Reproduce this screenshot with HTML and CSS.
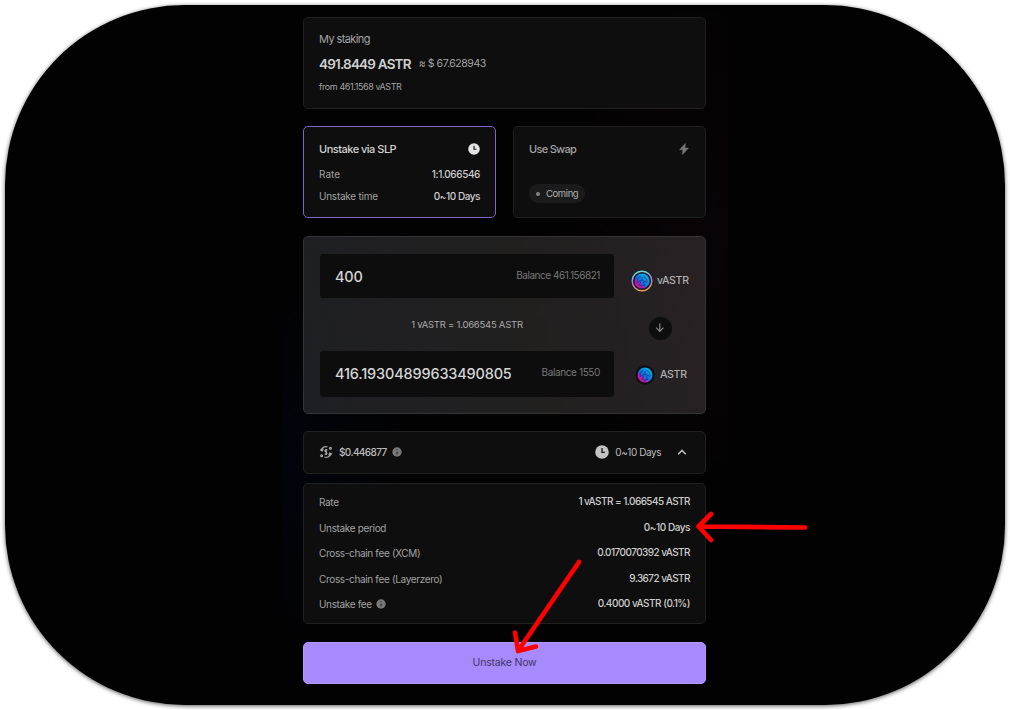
FILE: index.html
```
<!DOCTYPE html>
<html lang="en">
<head>
<meta charset="utf-8">
<title>Unstake ASTR</title>
<link rel="stylesheet" href="styles.css">
</head>
<body>
<svg class="defs" width="0" height="0">
  <defs>
    <linearGradient id="coin" x1="0.1" y1="0.9" x2="0.85" y2="0.1">
      <stop offset="0" stop-color="#ed0598"/><stop offset="0.28" stop-color="#a421b8"/><stop offset="0.45" stop-color="#0a72e4"/><stop offset="1" stop-color="#00bce6"/>
    </linearGradient>
    <linearGradient id="ring" x1="0.35" y1="0" x2="0.6" y2="1">
      <stop offset="0" stop-color="#69e5df"/><stop offset="0.5" stop-color="#b07ae0"/><stop offset="1" stop-color="#e7a34c"/>
    </linearGradient>
    <symbol id="astar" viewBox="-8 -8 16 16">
      <circle r="7.5" fill="url(#coin)"/>
      <g fill="none" stroke="#163080" stroke-width=".8" stroke-linecap="round">
        <path d="M-4.8 1.6A5 5 0 0 1-1.8-4.7M1.8-4.7A5 5 0 0 1 4.8 1.6M3 4.2A5.2 5.2 0 0 1-3 4.2"/>
        <path d="M0-3.5V-.8M0-.8L-3.6 .8M0-.8L3.6 .8M-1.6 1.6L-2.4 3.4M1.6 1.6L2.4 3.4"/>
      </g>
    </symbol>
    <symbol id="clock" viewBox="0 0 14 14">
      <circle cx="7" cy="7" r="6.8" fill="currentColor"/>
      <path d="M7 3.1V7.3H9.8" fill="none" stroke="#111" stroke-width="1.3"/>
    </symbol>
    <symbol id="info" viewBox="0 0 10 10">
      <circle cx="5" cy="5" r="4.7" fill="#777"/>
      <path d="M5 4.4V7.5M5 2.3V3.3" stroke="#303030" stroke-width="1.1"/>
    </symbol>
  </defs>
</svg>
<div class="frame">
  <main class="column">
    <section class="card staking">
      <div class="staking-title">My staking</div>
      <div class="staking-amount"><span class="amount">491.8449 ASTR</span><span class="usd">≈ $ 67.628943</span></div>
      <div class="staking-from">from 461.1568 vASTR</div>
    </section>

    <div class="modes">
      <section class="card mode mode-active">
        <div class="mode-head"><span class="mode-name">Unstake via SLP</span><svg class="mode-clock"><use href="#clock"/></svg></div>
        <div class="mode-row rate"><span>Rate</span><span class="v v-ratio">1:1.066546</span></div>
        <div class="mode-row"><span class="k-time">Unstake time</span><span class="v v-days">0~10 Days</span></div>
      </section>
      <section class="card mode">
        <div class="mode-head"><span class="mode-swap">Use Swap</span><svg class="bolt" viewBox="0 0 10 12"><path d="M6.3.6L.6 6.8H3.9L3.5 11.4L9.4 5.1H6Z" fill="#777" stroke="#777" stroke-width=".6" stroke-linejoin="round"/></svg></div>
        <div class="coming"><i class="dot"></i><span>Coming</span></div>
      </section>
    </div>

    <section class="swap">
      <div class="fields">
        <div class="field"><input class="value" value="400" aria-label="vASTR amount"><span class="balance">Balance 461.156821</span></div>
        <div class="rate-line"><span>1 vASTR = 1.066545 ASTR</span></div>
        <div class="field field-out"><input class="value" value="416.193048996334908052" readonly aria-label="ASTR amount"><span class="balance balance-out">Balance 1550</span></div>
      </div>
      <div class="tokens">
        <div class="token token-in">
          <svg class="coin-in" viewBox="-11 -11 22 22"><circle r="9.8" fill="#16182a" stroke="url(#ring)" stroke-width="1.4"/><use href="#astar" x="-8" y="-8" width="16" height="16"/></svg>
          <span>vASTR</span>
        </div>
        <svg class="arrow-down" viewBox="0 0 23 23"><circle cx="11.5" cy="11.5" r="11.5" fill="#0e0e0e"/><path d="M10.8 6.5V14.3M7.2 10.7L10.8 14.3L14.4 10.7" fill="none" stroke="#888" stroke-width="1.2"/></svg>
        <div class="token token-out">
          <svg class="coin-out" viewBox="-10 -10 20 20"><circle r="9.7" fill="#0d0c0f"/><use href="#astar" x="-8" y="-8" width="16" height="16"/></svg>
          <span>ASTR</span>
        </div>
      </div>
    </section>

    <section class="card summary">
      <svg class="gas" viewBox="0 0 14 14" fill="none" stroke="#aaa" stroke-width="1.2"><path d="M2 5.5A5 5 0 0 1 8.5 2M4.3 3.8L3.2 5.9L1 4.8M12 8.5A5 5 0 0 1 5.5 12M9.7 10.2L10.8 8.1L13 9.2M8.4 4.8C6.4 4.2 5.3 5.8 6.6 6.7C8.8 7.5 8 9.9 5.7 9M7.2 4V10"/><circle cx="11.4" cy="3.2" r=".9"/><circle cx="2.6" cy="10.8" r=".9"/></svg>
      <span class="gas-cost">$0.446877</span>
      <svg class="info"><use href="#info"/></svg>
      <svg class="sum-clock"><use href="#clock"/></svg>
      <span class="v-days sum-days">0~10 Days</span>
      <svg class="chevron" viewBox="0 0 10 8"><path d="M1.2 6.3L5 2.4L8.8 6.3" fill="none" stroke="#bbb" stroke-width="1.6"/></svg>
    </section>

    <section class="card details">
      <div class="row"><span class="k">Rate</span><span class="v v-amt">1 vASTR = 1.066545 ASTR</span></div>
      <div class="row"><span class="k">Unstake period</span><span class="v v-days">0~10 Days</span></div>
      <div class="row"><span class="k">Cross-chain fee (XCM)</span><span class="v v-amt">0.0170070392 vASTR</span></div>
      <div class="row"><span class="k">Cross-chain fee (Layerzero)</span><span class="v v-amt">9.3672 vASTR</span></div>
      <div class="row"><span class="k fee">Unstake fee<svg class="info"><use href="#info"/></svg></span><span class="v v-fee">0.4000 vASTR (0.1%)</span></div>
    </section>

    <button class="submit" type="button"><span>Unstake Now</span></button>
  </main>
</div>
<svg class="marks" viewBox="0 0 1010 710" fill="none" stroke="#fe0000" stroke-width="4.6" stroke-linecap="round" stroke-linejoin="round">
  <path d="M805 527.5L698.5 526.5M711 514L698.5 526.5L711 540"/>
  <path d="M579 562L518 651M515 632.5L518 651L536 646.5"/>
</svg>
</body>
</html>
```
FILE: styles.css
```
* { box-sizing: border-box; }
body { margin: 0; width: 1010px; height: 710px; overflow: hidden; background: #fff; padding: 5px; font-family: Inter, "Noto Sans", sans-serif; font-size: 10px; line-height: 14px; color: #a3a3a3; white-space: nowrap; }
svg { display: block; flex: none; }
.defs { position: absolute; }
.frame { width: 1000px; height: 700px; border-radius: 180px; padding: 12px 0 0 298px; box-shadow: 0 1px 4px rgba(0,0,0,.65); background: radial-gradient(ellipse 150px 290px at 410px 235px, #090306, transparent) 278px 0 / 445px 100% no-repeat, radial-gradient(ellipse 120px 190px at 10px 460px, #01040c, transparent) 278px 0 / 445px 100% no-repeat, #020202; }
.column { width: 403px; }
.card { background: #0e0e0e; border: 1px solid #202020; border-radius: 5px; }

.staking { height: 92px; padding: 14px 15px; }
.staking-title { font-size: 11px; letter-spacing: -.6px; }
.staking-amount { display: flex; align-items: center; gap: 8px; margin-top: 9px; height: 18px; }
.amount { font-size: 13.5px; font-weight: 600; color: #d0d0d0; letter-spacing: -.8px; }
.usd { font-size: 10.5px; letter-spacing: -.43px; }
.staking-from { margin-top: 7px; font-size: 9px; letter-spacing: -.4px; }

.modes { display: grid; grid-template-columns: 193px 193px; gap: 17px; margin-top: 17px; }
.mode { height: 92px; padding: 15px; }
.mode-active { border-color: #7f66c4; }
.mode-head, .mode-row { display: flex; justify-content: space-between; align-items: center; }
.mode-head { height: 14px; font-size: 11px; }
.mode-name { color: #d2d2d2; font-weight: 500; letter-spacing: -.5px; }
.mode-swap { letter-spacing: -.7px; font-weight: 500; }
.mode-clock { width: 12px; height: 12px; color: #e4e4e4; }
.bolt { width: 10px; height: 12px; margin-right: 1px; }
.rate { margin: 11px 0 8px; }
.k-time { letter-spacing: -.25px; }
.v { color: #cdcdcd; font-weight: 500; }
.v-ratio { letter-spacing: -.4px; }
.v-days { letter-spacing: -.45px; }
.v-amt { letter-spacing: -.56px; }
.v-fee { letter-spacing: -.5px; }
.coming { display: flex; align-items: center; gap: 6px; width: 56px; height: 19px; margin-top: 28px; padding-left: 7px; border-radius: 10px; background: #1b1b1b; color: #b0b0b0; font-size: 9.5px; letter-spacing: -.4px; }
.dot { width: 4px; height: 4px; border-radius: 50%; background: #858585; }

.swap { display: flex; height: 178px; margin-top: 18px; padding: 17px 0 17px 16px; border: 1px solid #343335; border-radius: 5px; background: linear-gradient(77deg, #1e1f24 0%, #202022 30%, #21201f 55%, #252022 80%, #272123 100%); }
.fields { flex: none; width: 294px; }
.field { display: flex; justify-content: space-between; height: 44px; padding: 15px 14px 0 15px; border-radius: 3px; background: #0d0d0d; }
.field-out { height: 46px; }
.value { width: 176px; height: 16px; padding: 0; border: 0; outline: 0; background: none; font: 500 14.5px/16px Inter, sans-serif; letter-spacing: -.17px; color: #d4d4d4; }
.balance { line-height: 12px; color: #777; letter-spacing: -.45px; }
.balance-out { letter-spacing: -.38px; }
.rate-line { height: 53px; padding-top: 20px; text-align: center; color: #ababab; font-size: 9.5px; letter-spacing: -.24px; }
.tokens { flex: 1; color: #b1aeaf; font-weight: 500; font-size: 10.5px; }
.token { display: flex; align-items: center; letter-spacing: -.3px; }
.token-in { height: 22px; margin: 16px 0 0 17px; gap: 4px; }
.coin-in { width: 22px; height: 22px; }
.arrow-down { width: 23px; height: 23px; margin: 25px 0 0 35px; }
.token-out { height: 20px; margin: 25px 0 0 21px; gap: 5px; }
.coin-out { width: 20px; height: 20px; }

.summary { display: flex; align-items: center; height: 43px; margin-top: 17px; padding: 0 18px 1px 15px; color: #bdbdbd; }
.gas { width: 14px; height: 14px; margin-right: 6px; }
.gas-cost { margin-right: 5px; letter-spacing: -.6px; font-weight: 500; }
.info { width: 10px; height: 10px; }
.sum-clock { width: 14px; height: 14px; margin-left: auto; margin-right: 6px; color: #c3c3c3; }
.sum-days { margin-right: 16px; }
.chevron { width: 10px; height: 8px; }

.details { display: flex; flex-direction: column; gap: 11.5px; height: 141px; margin-top: 9px; padding: 10px 15px 0; }
.row { display: flex; justify-content: space-between; height: 14px; }
.k { padding-top: 1px; letter-spacing: -.34px; }
.fee { display: flex; align-items: center; gap: 4px; }
.submit { display: flex; justify-content: center; width: 403px; height: 42px; margin-top: 17.5px; padding: 13px 0; border: 1px solid #b49af8; border-radius: 5px; background: #a88aff; font: 10.5px/14px Inter, sans-serif; letter-spacing: -.2px; color: #41365f; }
.marks { position: absolute; left: 0; top: 0; width: 1010px; height: 710px; pointer-events: none; }
```
